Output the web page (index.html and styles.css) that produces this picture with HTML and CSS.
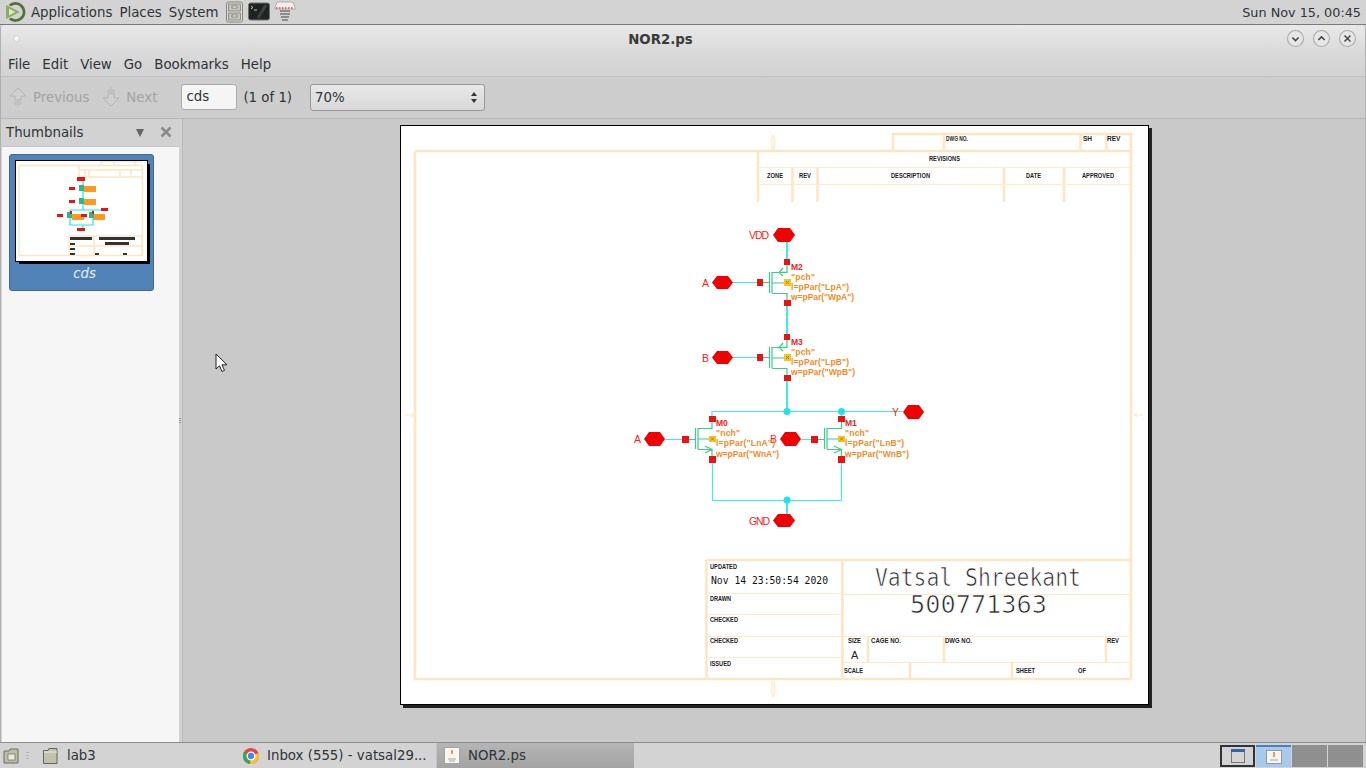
FILE: index.html
```html
<!DOCTYPE html>
<html lang="en">
<head>
    <meta charset="UTF-8">
    <title>NOR2.ps</title>
    <link rel="stylesheet" href="styles.css">
</head>
<body>
    <!-- Top panel -->
    <div class="top-panel">
        <svg class="logo" width="22" height="22" viewBox="0 0 22 22">
            <circle cx="11.500" cy="11" r="8.600" fill="none" stroke="#55703c" stroke-width="2.800"/>
            <path d="M1.500 3 L17 11 L1.500 19 Z" fill="#8aac58" stroke="#d3d3d3" stroke-width="1.200"/>
            <path d="M5 7.500 L11.500 11 L5 14.500 Z" fill="#dce8c6"/>
        </svg>
        <span class="panel-menu first">Applications</span>
        <span class="panel-menu">Places</span>
        <span class="panel-menu">System</span>
        <div class="launchers">
            <svg width="18" height="22" viewBox="0 0 18 22">
                <rect x=".5" y="1" width="16" height="20" rx="2" fill="#dcdcd4" stroke="#85857d"/>
                <rect x="2.500" y="3" width="12" height="7" fill="#c4c4bc" stroke="#77776f" stroke-width=".7"/>
                <rect x="2.500" y="12" width="12" height="7" fill="#c4c4bc" stroke="#77776f" stroke-width=".7"/>
                <rect x="6" y="5" width="5" height="2" fill="#f5f5f5" stroke="#55554f" stroke-width=".6"/>
                <rect x="6" y="14" width="5" height="2" fill="#f5f5f5" stroke="#55554f" stroke-width=".6"/>
            </svg>
            <svg width="22" height="20" viewBox="0 0 22 20">
                <rect x=".5" y="1" width="21" height="17" rx="2" fill="#1f2322" stroke="#6d7270"/>
                <path d="M3 4 L5 5.500 L3 7 M6 8 H9" fill="none" stroke="#e8e8e8" stroke-width=".8"/>
                <path d="M10 16 L18 3" stroke="#3c4241" stroke-width="3"/>
            </svg>
            <svg width="22" height="22" viewBox="0 0 22 22">
                <path d="M3 1 H19 L21.500 8 H.5 Z" fill="#f1eeea" stroke="#9b9b95" stroke-width=".7"/>
                <path d="M2 7 H20" stroke="#d05050" stroke-width="1.400" stroke-dasharray="1.500 1.500"/>
                <path d="M6 10 H16 M6 13 H16 M7 16 H15 M8 19 H14" stroke="#77776f" stroke-width="1.600"/>
            </svg>
        </div>
        <span class="panel-clock">Sun Nov 15, 00:45</span>
    </div>

    <!-- Document viewer window -->
    <div class="window">
        <div class="titlebar">
            <span class="title-dot"></span>
            <span class="title-text">NOR2.ps</span>
            <div class="title-buttons">
                <svg class="win-btn" viewBox="0 0 16 16"><circle cx="8" cy="8" r="7.500"/><path d="M5 7 L8 10 L11 7"/></svg>
                <svg class="win-btn" viewBox="0 0 16 16"><circle cx="8" cy="8" r="7.500"/><path d="M5 9.500 L8 6.500 L11 9.500"/></svg>
                <svg class="win-btn" viewBox="0 0 16 16"><circle cx="8" cy="8" r="7.500"/><path d="M5.200 5.200 L10.800 10.800 M10.800 5.200 L5.200 10.800"/></svg>
            </div>
        </div>

        <div class="menubar">
            <span>File</span><span>Edit</span><span>View</span><span>Go</span><span>Bookmarks</span><span>Help</span>
        </div>

        <div class="toolbar">
            <div class="tool-btn">
                <svg width="18" height="22" viewBox="0 0 18 22"><path d="M9 2 L17 10 H12 V14 H6 V10 H1 Z M6 16 H12 V18 H6 Z" fill="#d0d0d0" stroke="#b4b4b4"/><circle cx="9" cy="20.500" r="1.200" fill="#c4c4c4"/></svg>
                <span>Previous</span>
            </div>
            <div class="tool-btn next">
                <svg width="18" height="22" viewBox="0 0 18 22"><circle cx="9" cy="1.700" r="1.200" fill="#c4c4c4"/><path d="M9 20 L17 12 H12 V8 H6 V12 H1 Z M6 4 H12 V6 H6 Z" fill="#d0d0d0" stroke="#b4b4b4"/></svg>
                <span>Next</span>
            </div>
            <div class="page-entry">cds</div>
            <span class="page-count">(1 of 1)</span>
            <div class="zoom-combo">
                <span>70%</span>
                <span class="combo-arrows"><i class="up"></i><i class="down"></i></span>
            </div>
        </div>

        <div class="main">
            <aside class="sidebar">
                <div class="side-head">
                    <span>Thumbnails</span>
                    <span class="side-arrow"></span>
                    <svg class="side-close" width="12" height="12" viewBox="0 0 12 12"><path d="M1.500 1.500 L10.500 10.500 M10.500 1.500 L1.500 10.500" stroke="#8a8a8a" stroke-width="2.600"/></svg>
                </div>
                <div class="side-list">
                    <div class="thumb-card">
                        <svg class="thumb" width="131" height="100" viewBox="15 161 131 100">
                            <rect x="15" y="161" width="131" height="100" fill="#fff"/>
                            <g class="t-cream">
                                <path d="M18 165.500 H141.500 V255.500 H18 Z"/>
                                <path d="M100 165.500 V161.500 H141 M78 177 H141 M78 165.500 V177 M68 236 H141 V255 M68 236 V255 M93 236 V255 M68 246 H141"/>
                                <path d="M113 161.500 V166 M134 161.500 V166 M84 170 V177 M88 170 V177 M119 170 V177 M130 170 V177 M78 170 H141"/>
                            </g>
                            <g class="t-cyan">
                                <path d="M82 179 V210 M69 210 H104 M69 210 V225 H92 V210 M82 225 V229"/>
                            </g>
                            <g class="t-orange">
                                <rect x="83" y="186" width="12" height="6"/>
                                <rect x="83" y="199" width="12" height="6"/>
                                <rect x="71" y="214" width="12" height="6"/>
                                <rect x="92" y="214" width="12" height="6"/>
                            </g>
                            <g class="t-green">
                                <rect x="78" y="185" width="5" height="6"/>
                                <rect x="78" y="198" width="5" height="6"/>
                                <rect x="66" y="212" width="5" height="6"/>
                                <rect x="88" y="212" width="5" height="6"/>
                            </g>
                            <g class="t-red">
                                <rect x="76" y="177" width="8" height="4"/>
                                <rect x="68" y="187" width="6" height="3"/>
                                <rect x="68" y="200" width="6" height="3"/>
                                <rect x="56" y="214" width="6" height="3"/>
                                <rect x="80" y="214" width="6" height="3"/>
                                <rect x="100" y="208" width="7" height="3"/>
                                <rect x="76" y="228" width="8" height="3"/>
                                <rect x="69" y="211" width="2" height="3"/>
                                <rect x="91" y="211" width="2" height="3"/>
                            </g>
                            <g class="t-black">
                                <rect x="69" y="237" width="22" height="3"/>
                                <rect x="98" y="237" width="36" height="3"/>
                                <rect x="104" y="242" width="24" height="3"/>
                                <rect x="69" y="243" width="5" height="2"/>
                                <rect x="69" y="248" width="5" height="2"/>
                                <rect x="69" y="253" width="5" height="2"/>
                                <rect x="94" y="253" width="4" height="2"/>
                                <rect x="122" y="253" width="4" height="2"/>
                            </g>
                        </svg>
                        <span class="thumb-name">cds</span>
                    </div>
                </div>
            </aside>
            <div class="pane-grip"><i></i><i></i><i></i></div>

            <div class="doc-view">
                <div class="sheet">
                    <svg width="747" height="578" viewBox="401 126 747 578">
                        <!-- drawing frame -->
                        <g class="frame-thick">
                            <path d="M415 151 H893 M415 151 V679 H1131 V134 H893 V151 M1131 151 H893"/>
                            <path d="M706.500 560 V679 M842.500 560 V679 M706.500 560 H1131"/>
                            <path d="M944 134 V151 M1080.500 134 V151 M1106.500 134 V151"/>
                            <path d="M758 151 V202 M792.500 167 V202 M817.500 167 V202 M1004 167 V202 M1064 167 V202"/>
                            <path d="M868 636 V662 M944 636 V662 M1106 636 V662 M910 662 V679 M1012 662 V679"/>
                        </g>
                        <g class="frame-thin">
                            <path d="M758 167.500 H1131 M758 184.500 H1131"/>
                            <path d="M706 593.500 H842 M706 614.500 H842 M706 636.500 H842 M706 657.500 H842"/>
                            <path d="M843 594.500 H1131 M843 636.500 H1131 M843 662.500 H1131"/>
                            <path d="M773 135 V150 M771 141 L773 135 L775 141 M771 141 L772 150 M775 141 L774 150"/>
                            <path d="M773 681 V697 M771 691 L773 697 L775 691 M771 691 L772 681 M775 691 L774 681"/>
                            <path d="M405 415 H414 M411 413 L414 415 L411 417"/>
                            <path d="M1134 415 H1143 M1137 413 L1134 415 L1137 417"/>
                        </g>

                        <!-- frame labels -->
                        <g class="label">
                            <text x="946" y="141" textLength="22" lengthAdjust="spacingAndGlyphs">DWG NO.</text>
                            <text x="1083" y="141">SH</text>
                            <text x="1107" y="141">REV</text>
                            <text x="929" y="161" textLength="31" lengthAdjust="spacingAndGlyphs">REVISIONS</text>
                            <text x="767" y="178" textLength="16" lengthAdjust="spacingAndGlyphs">ZONE</text>
                            <text x="799" y="178" textLength="12" lengthAdjust="spacingAndGlyphs">REV</text>
                            <text x="891" y="178" textLength="39" lengthAdjust="spacingAndGlyphs">DESCRIPTION</text>
                            <text x="1026" y="178" textLength="15" lengthAdjust="spacingAndGlyphs">DATE</text>
                            <text x="1082" y="178" textLength="32" lengthAdjust="spacingAndGlyphs">APPROVED</text>
                            <text x="710" y="569" textLength="27" lengthAdjust="spacingAndGlyphs">UPDATED</text>
                            <text x="710" y="601" textLength="21" lengthAdjust="spacingAndGlyphs">DRAWN</text>
                            <text x="710" y="622" textLength="28" lengthAdjust="spacingAndGlyphs">CHECKED</text>
                            <text x="710" y="643" textLength="28" lengthAdjust="spacingAndGlyphs">CHECKED</text>
                            <text x="710" y="666" textLength="21" lengthAdjust="spacingAndGlyphs">ISSUED</text>
                            <text x="848" y="643" textLength="13" lengthAdjust="spacingAndGlyphs">SIZE</text>
                            <text x="871" y="643" textLength="30" lengthAdjust="spacingAndGlyphs">CAGE NO.</text>
                            <text x="945" y="643" textLength="27" lengthAdjust="spacingAndGlyphs">DWG NO.</text>
                            <text x="1107" y="643" textLength="12" lengthAdjust="spacingAndGlyphs">REV</text>
                            <text x="844" y="673" textLength="19" lengthAdjust="spacingAndGlyphs">SCALE</text>
                            <text x="1016" y="673" textLength="19" lengthAdjust="spacingAndGlyphs">SHEET</text>
                            <text x="1078" y="673" textLength="8" lengthAdjust="spacingAndGlyphs">OF</text>
                        </g>
                        <text class="stamp" x="711" y="584" textLength="117" lengthAdjust="spacingAndGlyphs">Nov 14 23:50:54 2020</text>
                        <text class="size-a" x="851" y="659">A</text>
                        <text class="big-name" x="875" y="586" textLength="206" lengthAdjust="spacingAndGlyphs">Vatsal Shreekant</text>
                        <text class="big-name" x="910" y="613" textLength="137" lengthAdjust="spacingAndGlyphs">500771363</text>

                        <!-- nets -->
                        <g class="net trunk">
                            <path d="M787 242 V262 M787 302 V337 M787 378 V411 M787 500 V514"/>
                        </g>
                        <g class="net">
                            <path d="M733 282.500 H757 M733 357.500 H757"/>
                            <path d="M712 419 V411.500 H903 M841.500 411.500 V419"/>
                            <path d="M665 439.500 H682 M801 439.500 H811"/>
                            <path d="M712.500 459 V500.500 H841.500 V459"/>
                        </g>

                        <!-- transistors -->
                        <g class="mos">
                            <path d="M763 282.500 H769 M769.500 272 V293 M772 272 V293 M772 272.500 H787 V265 M772 293.500 H787 V300 M772 283 H784 M787 272 L779 272.500 L783 268 M779 272.500 L783 276"/>
                            <path d="M763 357.500 H769 M769.500 347 V368 M772 347 V368 M772 347.500 H787 V340 M772 368.500 H787 V375 M772 358 H784 M787 347 L779 347.500 L783 343 M779 347.500 L783 351"/>
                            <path d="M689 439.500 H695 M695.500 428 V449 M698 428 V449 M698 428.500 H712 V421 M698 449.500 H712 V456 M698 439 H709 M705 446 L712 449.500 L705 453"/>
                            <path d="M818 439.500 H824 M824.500 428 V449 M827 428 V449 M827 428.500 H841.500 V421 M827 449.500 H841.500 V456 M827 439 H838 M834 446 L841.500 449.500 L834 453"/>
                        </g>

                        <!-- pin squares -->
                        <g class="pin">
                            <rect x="784" y="259" width="6" height="6"/>
                            <rect x="757" y="279" width="6" height="7"/>
                            <rect x="784" y="300" width="7" height="6"/>
                            <rect x="784" y="334" width="6" height="6"/>
                            <rect x="757" y="354" width="6" height="7"/>
                            <rect x="784" y="375" width="7" height="6"/>
                            <rect x="709" y="416" width="7" height="6"/>
                            <rect x="682" y="436" width="7" height="7"/>
                            <rect x="709" y="456" width="7" height="7"/>
                            <rect x="838" y="416" width="7" height="6"/>
                            <rect x="811" y="436" width="7" height="7"/>
                            <rect x="838" y="456" width="7" height="7"/>
                        </g>
                        <g class="center-mark">
                            <rect x="784" y="279" width="7" height="7"/>
                            <rect x="784" y="354" width="7" height="7"/>
                            <rect x="709" y="436" width="7" height="6"/>
                            <rect x="838" y="436" width="7" height="6"/>
                        </g>
                        <g class="center-x">
                            <path d="M786 281 L789 284 M789 281 L786 284 M786 356 L789 359 M789 356 L786 359 M711 437.500 L714 440.500 M714 437.500 L711 440.500 M840 437.500 L843 440.500 M843 437.500 L840 440.500"/>
                        </g>
                        <g class="dot">
                            <circle cx="787" cy="411.500" r="3.500"/>
                            <circle cx="841.500" cy="411.500" r="3.500"/>
                            <circle cx="787" cy="500" r="3.500"/>
                        </g>

                        <!-- terminals -->
                        <g class="terminal">
                            <path d="M773 235 L778 228 H790 L795 235 L790 242 H778 Z"/>
                            <path d="M712 282.500 L717 276 H728 L733 282.500 L728 289 H717 Z"/>
                            <path d="M712 357.500 L717 351 H728 L733 357.500 L728 364 H717 Z"/>
                            <path d="M644 439 L649 432 H660 L665 439 L660 446 H649 Z"/>
                            <path d="M780 439 L785 432 H796 L801 439 L796 446 H785 Z"/>
                            <path d="M903 412 L908 405 H919 L924 412 L919 419 H908 Z"/>
                            <path d="M773 520.500 L778 514 H790 L795 520.500 L790 527 H778 Z"/>
                        </g>
                        <g class="pin-name">
                            <text x="749" y="239" textLength="20">VDD</text>
                            <text x="702" y="287">A</text>
                            <text x="702" y="362">B</text>
                            <text x="634" y="443">A</text>
                            <text x="770" y="443">B</text>
                            <text x="892" y="416">Y</text>
                            <text x="749" y="525" textLength="21">GND</text>
                        </g>
                        <g class="inst-name">
                            <text x="791" y="270">M2</text>
                            <text x="791" y="345">M3</text>
                            <text x="716" y="426">M0</text>
                            <text x="845" y="426">M1</text>
                        </g>
                        <g class="param">
                            <text x="791" y="280" textLength="24">"pch"</text>
                            <text x="791" y="290" textLength="58">l=pPar("LpA")</text>
                            <text x="791" y="300" textLength="63">w=pPar("WpA")</text>
                            <text x="791" y="355" textLength="24">"pch"</text>
                            <text x="791" y="365" textLength="58">l=pPar("LpB")</text>
                            <text x="791" y="375" textLength="64">w=pPar("WpB")</text>
                            <text x="716" y="436" textLength="24">"nch"</text>
                            <text x="716" y="446" textLength="59">l=pPar("LnA")</text>
                            <text x="716" y="457" textLength="63">w=pPar("WnA")</text>
                            <text x="845" y="436" textLength="24">"nch"</text>
                            <text x="845" y="446" textLength="59">l=pPar("LnB")</text>
                            <text x="845" y="457" textLength="64">w=pPar("WnB")</text>
                        </g>
                    </svg>
                </div>
            </div>
        </div>
    </div>

    <!-- Bottom panel -->
    <div class="bottom-panel">
        <svg class="desk-icon" width="17" height="18" viewBox="0 0 17 18">
            <path d="M1 4 H6 L7 2 H15 V16 H1 Z" fill="#bcbca8" stroke="#6f6f62"/>
            <rect x="5" y="7" width="7" height="6" fill="#e9e9df" stroke="#6f6f62" stroke-width=".7"/>
        </svg>
        <span class="task-grip"><i></i><i></i><i></i></span>
        <div class="task-item">
            <svg width="17" height="18" viewBox="0 0 17 18">
                <path d="M1.500 3.500 H6 L7 1.500 H15 V16.500 H1.500 Z" fill="#c2c2ac" stroke="#66665a"/>
                <path d="M2 5 H15" stroke="#efefe4"/>
            </svg>
            <span>lab3</span>
        </div>
        <div class="task-item chrome-item">
            <svg width="16" height="16" viewBox="0 0 16 16">
                <circle cx="8" cy="8" r="8" fill="#dd4b3e"/>
                <path d="M8 8 L1 4 A8 8 0 0 0 7 16 Z" fill="#3aa757"/>
                <path d="M8 8 L15.500 5 A8 8 0 0 1 7 16 Z" fill="#fbc02d"/>
                <circle cx="8" cy="8" r="3.800" fill="#4a86e8" stroke="#fff" stroke-width="1.300"/>
            </svg>
            <span>Inbox (555) - vatsal29...</span>
        </div>
        <div class="task-item active">
            <svg width="16" height="17" viewBox="0 0 16 17">
                <rect x=".5" y=".5" width="15" height="16" fill="#f6f6f2" stroke="#a5a5a0"/>
                <path d="M7 3 H9 V7 H7 Z" fill="#e0a050"/>
                <path d="M4 12 H12 M5 14 H11" stroke="#a8a8a0"/>
            </svg>
            <span>NOR2.ps</span>
        </div>
        <div class="workspaces">
            <div class="ws ws-current">
                <svg width="14" height="14" viewBox="0 0 14 14">
                    <rect x=".5" y=".5" width="13" height="13" fill="#d5d5d5" stroke="#777"/>
                    <rect x="0" y="0" width="14" height="3" fill="#3465a4"/>
                </svg>
            </div>
            <div class="ws ws-blue">
                <svg width="16" height="14" viewBox="0 0 16 14">
                    <rect x=".5" y=".5" width="15" height="13" fill="#f4f4f0" stroke="#999"/>
                    <path d="M7 2 H9 V7 H7 Z" fill="#e0a050"/>
                    <path d="M4 10 H12" stroke="#aaa"/>
                </svg>
            </div>
            <div class="ws"></div>
            <div class="ws"></div>
        </div>
    </div>

    <!-- mouse pointer -->
    <svg class="cursor" width="14" height="20" viewBox="0 0 14 20">
        <path d="M1 1 V16 L4.500 12.800 L7 18.500 L9.500 17.400 L7 11.800 L12 11.800 Z" fill="#fff" stroke="#222" stroke-width="1"/>
    </svg>
</body>
</html>
```

FILE: styles.css
```css
* {
    box-sizing: border-box;
}

html, body {
    margin: 0;
    padding: 0;
}

body {
    width: 1366px;
    height: 768px;
    overflow: hidden;
    display: flex;
    flex-direction: column;
    font-family: "DejaVu Sans", sans-serif;
    font-size: 13.33px;
    color: #2e3436;
    background-color: #d3d3d3;
    position: relative;
}

/* Top panel */
.top-panel {
    height: 25px;
    flex-shrink: 0;
    display: flex;
    align-items: center;
    padding-left: 4px;
    background-color: #d3d3d3;
    border-bottom: 1px solid #7b7b7b;
}

.panel-menu {
    margin-left: 7px;
}

.panel-menu.first {
    margin-left: 5px;
}

.launchers {
    display: flex;
    align-items: center;
    gap: 4px;
    margin-left: 7px;
}

.panel-clock {
    margin-left: auto;
    margin-right: 5px;
    font-size: 12.8px;
}

/* Window */
.window {
    flex: 1;
    min-height: 0;
    display: flex;
    flex-direction: column;
    border-left: 1px solid #b0b0b0;
    border-right: 1px solid #b0b0b0;
    border-radius: 4px 4px 0 0;
    overflow: hidden;
    background-color: #d2d2d2;
}

.titlebar {
    height: 26px;
    flex-shrink: 0;
    display: flex;
    align-items: center;
    position: relative;
    padding: 0 9px 0 12px;
    background: linear-gradient(#e9e9e9, #dadada);
}

.title-dot {
    width: 7px;
    height: 7px;
    border-radius: 50%;
    background-color: #f4f4f4;
    border: 1px solid #cfcfcf;
}

.title-text {
    flex: 1;
    text-align: center;
    font-weight: bold;
    font-size: 13.33px;
    color: #3a3a3a;
    padding: 2px 0 0 14px;
}

.title-buttons {
    display: flex;
    gap: 9px;
}

.win-btn {
    width: 17px;
    height: 17px;
}

.win-btn circle {
    fill: #e6e6e6;
    stroke: #a9a9a9;
}

.win-btn path {
    fill: none;
    stroke: #444;
    stroke-width: 1.4;
}

.menubar {
    height: 25px;
    flex-shrink: 0;
    display: flex;
    align-items: center;
    gap: 12px;
    padding: 2px 0 0 7px;
    background: linear-gradient(#dadada, #d2d2d2);
}

.toolbar {
    height: 43px;
    flex-shrink: 0;
    display: flex;
    align-items: center;
    padding: 0 0 1px 8px;
    background-color: #cdcdcd;
    border-top: 1px solid #c0c0c0;
    border-bottom: 1px solid #b5b5b5;
}

.tool-btn {
    display: flex;
    align-items: center;
    gap: 6px;
    color: #a2a2a2;
}

.tool-btn.next {
    margin-left: 13px;
}

.page-entry {
    width: 56px;
    height: 26px;
    margin-left: 24px;
    padding-left: 4px;
    line-height: 24px;
    background-color: #f5f5f5;
    border: 1px solid #aaa;
    border-radius: 3px;
}

.page-count {
    margin-left: 6px;
}

.zoom-combo {
    width: 175px;
    height: 27px;
    margin-left: 18px;
    padding: 0 7px 0 4px;
    display: flex;
    align-items: center;
    justify-content: space-between;
    background: linear-gradient(#e8e8e8, #d8d8d8);
    border: 1px solid #9a9a9a;
    border-radius: 3px;
}

.combo-arrows {
    display: flex;
    flex-direction: column;
    gap: 3px;
}

.combo-arrows i {
    display: block;
    width: 0;
    height: 0;
    border-left: 3px solid transparent;
    border-right: 3px solid transparent;
}

.combo-arrows .up {
    border-bottom: 4px solid #333;
}

.combo-arrows .down {
    border-top: 4px solid #333;
}

.main {
    flex: 1;
    min-height: 0;
    display: flex;
}

/* Sidebar */
.sidebar {
    width: 178px;
    flex-shrink: 0;
    display: flex;
    flex-direction: column;
    background-color: #d2d2d2;
}

.side-head {
    height: 27px;
    flex-shrink: 0;
    display: flex;
    align-items: center;
    padding-left: 5px;
    position: relative;
}

.side-arrow {
    position: absolute;
    left: 135px;
    top: 10px;
    width: 0;
    height: 0;
    border-left: 4px solid transparent;
    border-right: 4px solid transparent;
    border-top: 8px solid #666;
}

.side-close {
    position: absolute;
    left: 159px;
    top: 7px;
}

.side-list {
    flex: 1;
    margin-left: 1px;
    padding: 7px 0 0 7px;
    background-color: #f6f6f6;
    border-top: 1px solid #c4c4c4;
}

.thumb-card {
    width: 145px;
    height: 137px;
    padding: 6px 0 0 6px;
    background-color: #5283b8;
    border: 1px solid #3f6a98;
    border-radius: 3px;
    display: flex;
    flex-direction: column;
}

.thumb {
    display: block;
    outline: 1px solid #000;
    box-shadow: 3px 3px 0 #000;
}

.thumb-name {
    margin-top: 5px;
    text-align: center;
    font-style: italic;
    font-size: 13.33px;
    color: #e8eef6;
}

.t-cream {
    fill: none;
    stroke: #fde6c4;
    stroke-width: 1.5;
}

.t-cyan {
    fill: none;
    stroke: #22e6ee;
    stroke-width: 1.2;
}

.t-orange {
    fill: #ff9a1e;
}

.t-green {
    fill: #2db88a;
}

.t-red {
    fill: #ee1111;
}

.t-black {
    fill: #333;
}

.pane-grip {
    width: 3px;
    flex-shrink: 0;
    display: flex;
    flex-direction: column;
    justify-content: center;
    gap: 1px;
    background-color: #d2d2d2;
    padding-bottom: 20px;
}

.pane-grip i {
    display: block;
    width: 2px;
    height: 1px;
    background-color: #999;
}

/* Document area */
.doc-view {
    flex: 1;
    min-width: 0;
    padding: 6px 0 0 217px;
    background-color: #c9c9c9;
    border-left: 1px solid #b8b8b8;
}

.sheet {
    width: 749px;
    height: 580px;
    background-color: #fff;
    border: 1px solid #000;
    box-shadow: 3px 3px 0 #222;
}

.sheet svg {
    display: block;
}

.frame-thick {
    fill: none;
    stroke: #fee6c4;
    stroke-width: 2.6;
}

.frame-thin {
    fill: none;
    stroke: #fdeacb;
    stroke-width: 1;
}

.label {
    font-family: "Liberation Sans", sans-serif;
    font-size: 6.5px;
    font-weight: bold;
    fill: #222;
}

.stamp {
    font-family: "DejaVu Sans Mono", monospace;
    font-size: 10px;
    fill: #111;
}

.size-a {
    font-family: "Liberation Sans", sans-serif;
    font-size: 11px;
    fill: #222;
}

.big-name {
    font-family: "DejaVu Sans Mono", monospace;
    font-size: 25px;
    fill: #222;
    stroke: #fff;
    stroke-width: 0.7;
}

.net {
    fill: none;
    stroke: #3cecf0;
    stroke-width: 1.2;
}

.net.trunk {
    stroke-width: 2;
}

.mos {
    fill: none;
    stroke: #3dcc8c;
    stroke-width: 1.2;
}

.pin {
    fill: #ee1111;
}

.center-mark {
    fill: #f5c518;
}

.center-x {
    fill: none;
    stroke: #d86a10;
    stroke-width: 1;
}

.dot {
    fill: #1de4ea;
}

.terminal {
    fill: #f00000;
}

.pin-name {
    font-family: "Liberation Sans", sans-serif;
    font-size: 10.5px;
    fill: #f22;
}

.inst-name {
    font-family: "Liberation Sans", sans-serif;
    font-size: 8.5px;
    font-weight: bold;
    fill: #e22;
}

.param {
    font-family: "Liberation Sans", sans-serif;
    font-size: 8.5px;
    font-weight: bold;
    fill: #f58a1f;
}

/* Bottom panel */
.bottom-panel {
    height: 26px;
    flex-shrink: 0;
    display: flex;
    align-items: center;
    padding-left: 3px;
    background-color: #d3d3d3;
    border-top: 1px solid #8c8c8c;
}

.task-grip {
    width: 3px;
    margin: 0 6px 0 6px;
    display: flex;
    flex-direction: column;
    gap: 2px;
}

.task-grip i {
    display: block;
    height: 1px;
    background-color: #b5b5b5;
}

.task-item {
    width: 198px;
    height: 25px;
    display: flex;
    align-items: center;
    gap: 8px;
    padding-left: 7px;
    margin-right: 2px;
}

.chrome-item {
    padding-left: 8px;
}

.task-item.active {
    margin-left: 1px;
    background: linear-gradient(#b5b5b5, #a3a3a3);
    border-left: 1px solid #c4c4c4;
}

.workspaces {
    margin-left: auto;
    margin-right: 3px;
    display: flex;
    gap: 1px;
    height: 22px;
}

.ws {
    width: 35px;
    height: 22px;
    background-color: #8f8f8f;
    display: flex;
    align-items: center;
    justify-content: center;
}

.ws-current {
    background-color: #d3d3d3;
    border: 2px solid #333;
}

.ws-blue {
    background-color: #a8c8ec;
    border-top: 2px solid #4a7fb8;
}

.cursor {
    position: absolute;
    left: 215px;
    top: 353px;
}
```
